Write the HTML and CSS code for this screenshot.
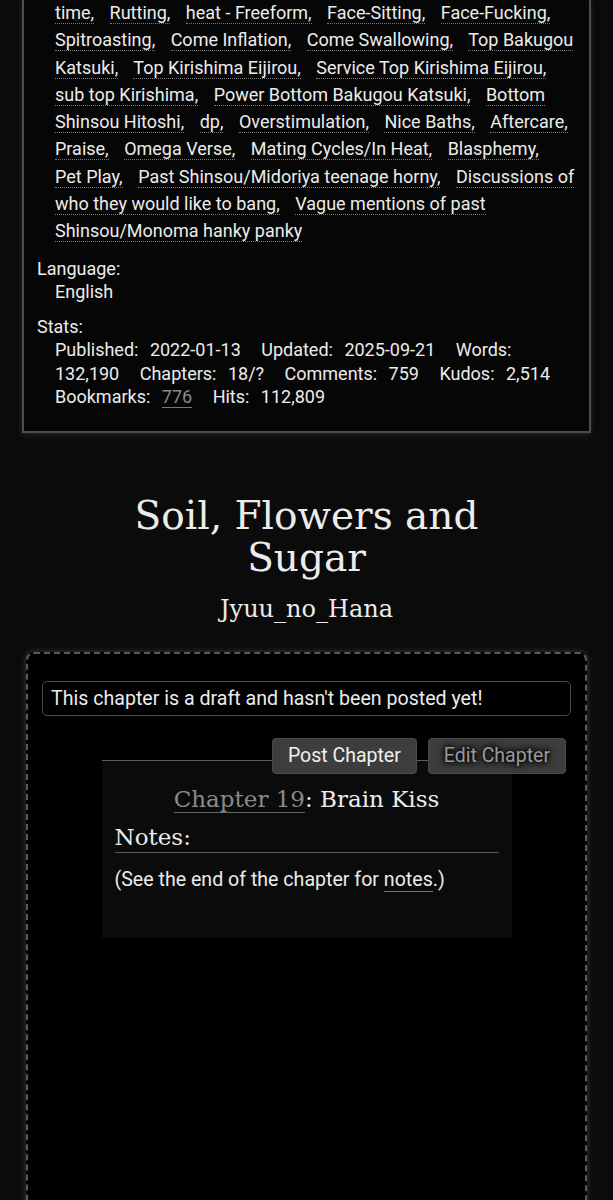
FILE: index.html
```html
<!DOCTYPE html>
<html>
<head>
<meta charset="utf-8">
<link rel="stylesheet" href="styles.css">
</head>
<body>
<div class="meta">
  <div class="tags">
    <span class="tag">time,</span> <span class="tag">Rutting,</span> <span class="tag">heat - Freeform,</span> <span class="tag">Face-Sitting,</span> <span class="tag">Face-Fucking,</span> <span class="tag">Spitroasting,</span> <span class="tag">Come Inflation,</span> <span class="tag">Come Swallowing,</span> <span class="tag">Top Bakugou Katsuki,</span> <span class="tag">Top Kirishima Eijirou,</span> <span class="tag">Service Top Kirishima Eijirou,</span> <span class="tag">sub top Kirishima,</span> <span class="tag">Power Bottom Bakugou Katsuki,</span> <span class="tag">Bottom Shinsou Hitoshi,</span> <span class="tag">dp,</span> <span class="tag">Overstimulation,</span> <span class="tag">Nice Baths,</span> <span class="tag">Aftercare,</span> <span class="tag">Praise,</span> <span class="tag">Omega Verse,</span> <span class="tag">Mating Cycles/In Heat,</span> <span class="tag">Blasphemy,</span> <span class="tag">Pet Play,</span> <span class="tag">Past Shinsou/Midoriya teenage horny,</span> <span class="tag">Discussions of who they would like to bang,</span> <span class="tag">Vague mentions of past Shinsou/Monoma hanky panky</span>
  </div>
  <div class="label">Language:</div>
  <div class="value">English</div>
  <div class="label stats-label">Stats:</div>
  <div class="value stats">
    <span class="k">Published:</span> <span class="v">2022-01-13</span>
    <span class="k">Updated:</span> <span class="v">2025-09-21</span>
    <span class="k">Words:</span> <span class="v">132,190</span>
    <span class="k">Chapters:</span> <span class="v">18/?</span>
    <span class="k">Comments:</span> <span class="v">759</span>
    <span class="k">Kudos:</span> <span class="v">2,514</span>
    <span class="k">Bookmarks:</span> <span class="v"><span class="blink">776</span></span>
    <span class="k">Hits:</span> <span class="v">112,809</span>
  </div>
</div>

<div class="heading">
  <h2 class="title">Soil, Flowers and Sugar</h2>
  <h3 class="byline">Jyuu_no_Hana</h3>
</div>

<div class="work">
  <div class="notice">This chapter is a draft and hasn't been posted yet!</div>
  <div class="actions">
    <span class="btn">Post Chapter</span>
    <span class="btn btn-dim">Edit Chapter</span>
  </div>
  <div class="chapter">
    <h3 class="ch-title"><span class="ch-link">Chapter 19</span>: Brain Kiss</h3>
    <h3 class="notes-h">Notes:</h3>
    <p class="notes-p">(See the end of the chapter for <span class="nlink">notes</span>.)</p>
  </div>
</div>
</body>
</html>
```

FILE: styles.css
```css
html, body {
  margin: 0;
  padding: 0;
  background: #0b0b0b;
  color: #ececec;
  font-family: Roboto, "Liberation Sans", sans-serif;
}

.meta {
  margin: 0 22px;
  background: #060606;
  border: 2px solid #4e4e4e;
  border-top: none;
  box-shadow: 0 2px 6px rgba(90, 90, 90, 0.35);
  padding: 0 10px 22px 13px;
  font-size: 18px;
}

.tags {
  margin-left: 18px;
  line-height: 27.3px;
  margin-top: -1px;
}

.tag {
  border-bottom: 1px dotted #777;
  margin-right: 11px;
}

.label {
  line-height: 23.5px;
  margin-top: 12px;
}

.value {
  margin-left: 18px;
  line-height: 23.5px;
}

.stats-label {
  margin-top: 11px;
}

.stats .k {
  margin-right: 7px;
}

.stats .v {
  margin-right: 16px;
}

.blink {
  color: #8a8a8a;
  border-bottom: 1px solid #777;
}

.heading {
  text-align: center;
  font-family: "DejaVu Serif", "Liberation Serif", serif;
  padding-top: 62px;
}

.title {
  margin: 0 auto;
  max-width: 400px;
  font-size: 39px;
  font-weight: normal;
  line-height: 42px;
}

.byline {
  margin: 15px 0 0;
  font-size: 24px;
  font-weight: normal;
  line-height: 30px;
}

.work {
  margin: 28px 26px 0;
  height: 700px;
  background: #000;
  border: 2px dashed #5a5a5a;
  border-radius: 8px;
  box-shadow: 0 0 6px rgba(110, 110, 110, 0.5);
  padding: 27px 14px 0;
}

.notice {
  border: 1px solid #4a4a4a;
  border-radius: 5px;
  padding: 0 8px;
  font-size: 19.6px;
  line-height: 33px;
}

.actions {
  display: flex;
  justify-content: flex-end;
  gap: 11px;
  margin: 22px 5px -14px 0;
  position: relative;
  z-index: 1;
}

.btn {
  display: block;
  background: #3d3d3d;
  border: 1px solid #4a4a4a;
  border-radius: 4px;
  padding: 0 15px;
  font-size: 19.5px;
  line-height: 34px;
  color: #f0f0f0;
}

.btn-dim {
  color: #9a9a9a;
  text-shadow: 0 0 4px #000, 0 0 6px #000, 0 0 8px #000;
}

.chapter {
  width: 384px;
  margin: 0 auto;
  background: #0b0b0b;
  border-top: 1px solid #5e5e5e;
  padding: 23px 13px 45px;
}

.ch-title {
  margin: 0;
  text-align: center;
  font-family: "DejaVu Serif", "Liberation Serif", serif;
  font-weight: normal;
  font-size: 23px;
  line-height: 30px;
}

.ch-link {
  color: #8a8a8a;
  border-bottom: 1px solid #666;
}

.notes-h {
  margin: 8px 0 0;
  font-family: "DejaVu Serif", "Liberation Serif", serif;
  font-weight: normal;
  font-size: 23px;
  line-height: 30px;
  border-bottom: 1px solid #5a5a5a;
}

.notes-p {
  margin: 14px 0 0;
  font-size: 19.6px;
  line-height: 26px;
}

.nlink {
  border-bottom: 1px solid #777;
}
```
